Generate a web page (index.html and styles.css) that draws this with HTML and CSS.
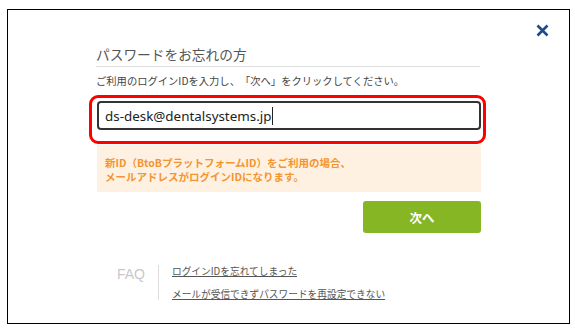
FILE: index.html
```html
<!DOCTYPE html>
<html lang="ja">
<head>
<meta charset="utf-8">
<link rel="stylesheet" href="styles.css">
</head>
<body>
<div class="modal">
  <button class="close" aria-label="閉じる">
    <svg width="13" height="13" viewBox="0 0 13 13"><path d="M1.5 1.5 L11.5 11.5 M11.5 1.5 L1.5 11.5" stroke="#1c4c8e" stroke-width="2.6" stroke-linecap="butt" fill="none"/></svg>
  </button>
  <div class="content">
    <h2 class="title">パスワードをお忘れの方</h2>
    <p class="lead">ご利用のログインIDを入力し、「次へ」をクリックしてください。</p>
    <div class="highlight">
      <div class="input"><span>ds-desk@dentalsystems.jp</span><span class="caret"></span></div>
    </div>
    <div class="note">新ID（BtoBプラットフォームID）をご利用の場合、<br>メールアドレスがログインIDになります。</div>
    <button class="next">次へ</button>
    <div class="faq">
      <div class="faq-label">FAQ</div>
      <div class="faq-links">
        <a href="#">ログインIDを忘れてしまった</a>
        <a href="#">メールが受信できずパスワードを再設定できない</a>
      </div>
    </div>
  </div>
</div>
</body>
</html>
```

FILE: styles.css
```css
html, body {
  margin: 0;
  padding: 0;
  background: #fff;
}
body {
  font-family: "Noto Sans CJK JP", "Noto Sans", sans-serif;
  color: #333;
  text-spacing-trim: space-all;
}
.modal {
  position: relative;
  margin: 9px 0 0 7px;
  width: 561px;
  height: 313px;
  border: 1px solid #000;
}
.close {
  position: absolute;
  top: 14px;
  left: 528px;
  width: 13px;
  height: 13px;
  padding: 0;
  border: 0;
  background: none;
  display: block;
}
.close svg { display: block; }
.content {
  margin-left: 81px;
  width: 397px;
  padding-top: 34px;
}
.title {
  margin: 0 6px 0 7px;
  font-size: 13.7px;
  font-weight: normal;
  line-height: 20px;
  color: #555;
  padding-bottom: 2px;
  border-bottom: 1px solid #ddd;
}
.lead {
  margin: 6px 0 6px 7px;
  font-size: 10.3px;
  line-height: 16px;
  color: #444;
}
.highlight {
  height: 36px;
  border: 3px solid #f00;
  border-radius: 9px;
  padding: 3px 2px 4px 5px;
  box-sizing: content-box;
}
.input {
  height: 25px;
  border: 2px solid #333;
  border-radius: 4px;
  padding-left: 6px;
  display: flex;
  align-items: center;
  font-family: "Noto Sans", sans-serif;
  font-size: 13.4px;
  color: #222;
}
.caret {
  display: inline-block;
  width: 1px;
  height: 18px;
  background: #222;
  margin-left: 1px;
}
.note {
  margin: 1px 5px 0 8px;
  padding: 11px 8px 8px;
  background: #fff1e2;
  color: #f39530;
  font-size: 10.5px;
  font-weight: bold;
  line-height: 14px;
}
.next {
  display: block;
  margin: 9px 0 0 274px;
  width: 118px;
  height: 32px;
  border: 0;
  border-radius: 3px;
  background: #87b624;
  color: #fff;
  font-family: "Noto Sans CJK JP", sans-serif;
  font-size: 12.5px;
  font-weight: bold;
  padding: 0;
}
.faq {
  display: flex;
  margin-top: 32px;
  margin-left: 28px;
}
.faq-label {
  width: 41px;
  font-family: "Liberation Sans", sans-serif;
  font-size: 14px;
  line-height: 16px;
  color: #c8c8c8;
  padding-top: 1px;
}
.faq-links {
  border-left: 1px solid #ddd;
  padding-left: 13px;
  display: flex;
  flex-direction: column;
  gap: 11px;
}
.faq-links a {
  font-size: 9.7px;
  line-height: 12px;
  color: #555;
  text-decoration: underline;
}
```
